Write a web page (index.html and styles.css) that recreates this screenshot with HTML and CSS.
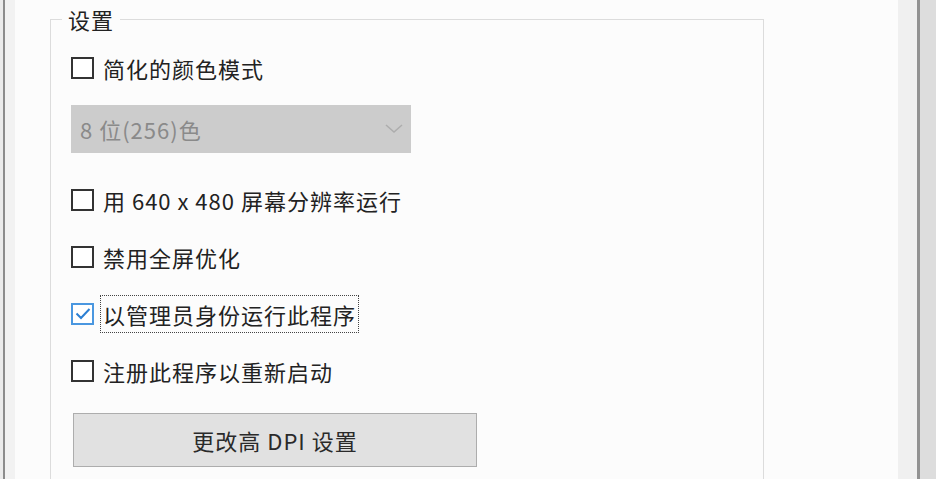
FILE: index.html
```html
<!DOCTYPE html>
<html lang="zh-CN">
<head>
  <meta charset="UTF-8">
  <title>兼容性设置</title>
  <link rel="stylesheet" href="styles.css">
</head>
<body>
  <div class="frame">
    <div class="edge-left"></div>

    <div class="panel">
      <fieldset class="settings">
        <legend>设置</legend>

        <label class="option">
          <span class="box"></span>
          <span class="text">简化的颜色模式</span>
        </label>

        <div class="select disabled">
          <span>8 位(256)色</span>
          <svg class="chevron" width="18" height="10" viewBox="0 0 18 10">
            <path d="M1 1 L9 8 L17 1" fill="none" stroke="#adadad" stroke-width="1.5"/>
          </svg>
        </div>

        <div class="options">
          <label class="option">
            <span class="box"></span>
            <span class="text">用 640 x 480 屏幕分辨率运行</span>
          </label>
          <label class="option">
            <span class="box"></span>
            <span class="text">禁用全屏优化</span>
          </label>
          <label class="option">
            <span class="box checked">
              <svg width="16" height="14" viewBox="0 0 16 14">
                <path d="M1.5 6.5 L6 11 L14.5 2" fill="none" stroke="#2b7fd3" stroke-width="2"/>
              </svg>
            </span>
            <span class="text focus">以管理员身份运行此程序</span>
          </label>
          <label class="option">
            <span class="box"></span>
            <span class="text">注册此程序以重新启动</span>
          </label>
        </div>

        <button class="dpi">更改高 DPI 设置</button>
      </fieldset>
    </div>

    <div class="edge-right"></div>
  </div>
</body>
</html>
```

FILE: styles.css
```css
body {
  margin: 0;
  font-family: "Noto Sans CJK SC", "Noto Sans", sans-serif;
  color: #222;
  background-color: #fcfcfc;
  overflow: hidden;
}
.frame {
  display: flex;
  height: 479px;
  overflow: hidden;
}
.edge-left {
  width: 12px;
  border-left: 3px solid #ebebeb;
  box-shadow: inset 2px 0 0 #8c8c8c;
  background-color: #f2f2f2;
}
.edge-right {
  width: 19px;
  border-left: 19px solid #f0f0f0;
  box-shadow: inset 3px 0 0 #929292;
  background-color: #dddddd;
  flex-shrink: 0;
}
.panel {
  flex: 1;
  padding: 6px 0 0 35px;
}
.settings {
  width: 714px;
  margin: 0;
  padding: 18px 0 0 20px;
  border: 1px solid #dcdcdc;
  border-bottom: none;
  height: 480px;
  box-sizing: border-box;
}
.settings legend {
  font-size: 22px;
  line-height: 26px;
  padding: 0 6px;
  margin-left: -9px;
  letter-spacing: 1px;
}
.option {
  display: flex;
  align-items: center;
  height: 36px;
  font-size: 22px;
  letter-spacing: 1px;
}
.box {
  width: 23px;
  height: 22px;
  border: 2px solid #333;
  box-sizing: border-box;
  margin-right: 6px;
  display: flex;
  align-items: center;
  justify-content: center;
  background-color: #fff;
}
.box.checked {
  border-color: #4a97e0;
}
.text {
  padding: 2px 2px;
  border: 1px dotted transparent;
}
.text.focus {
  border-color: #444;
}
.select {
  width: 340px;
  height: 48px;
  margin-top: 19px;
  display: flex;
  align-items: center;
  justify-content: space-between;
  padding: 0 8px 0 9px;
  box-sizing: border-box;
  font-size: 22px;
  letter-spacing: 1px;
}
.select.disabled {
  background-color: #cccccc;
  color: #8a8a8a;
}
.options {
  display: flex;
  flex-direction: column;
  gap: 21px;
  margin-top: 29px;
}
.dpi {
  display: block;
  width: 404px;
  height: 54px;
  margin: 24px 0 0 2px;
  background-color: #e1e1e1;
  border: 1px solid #adadad;
  font-family: inherit;
  font-size: 22px;
  letter-spacing: 1px;
  color: #2a2a2a;
}
```
